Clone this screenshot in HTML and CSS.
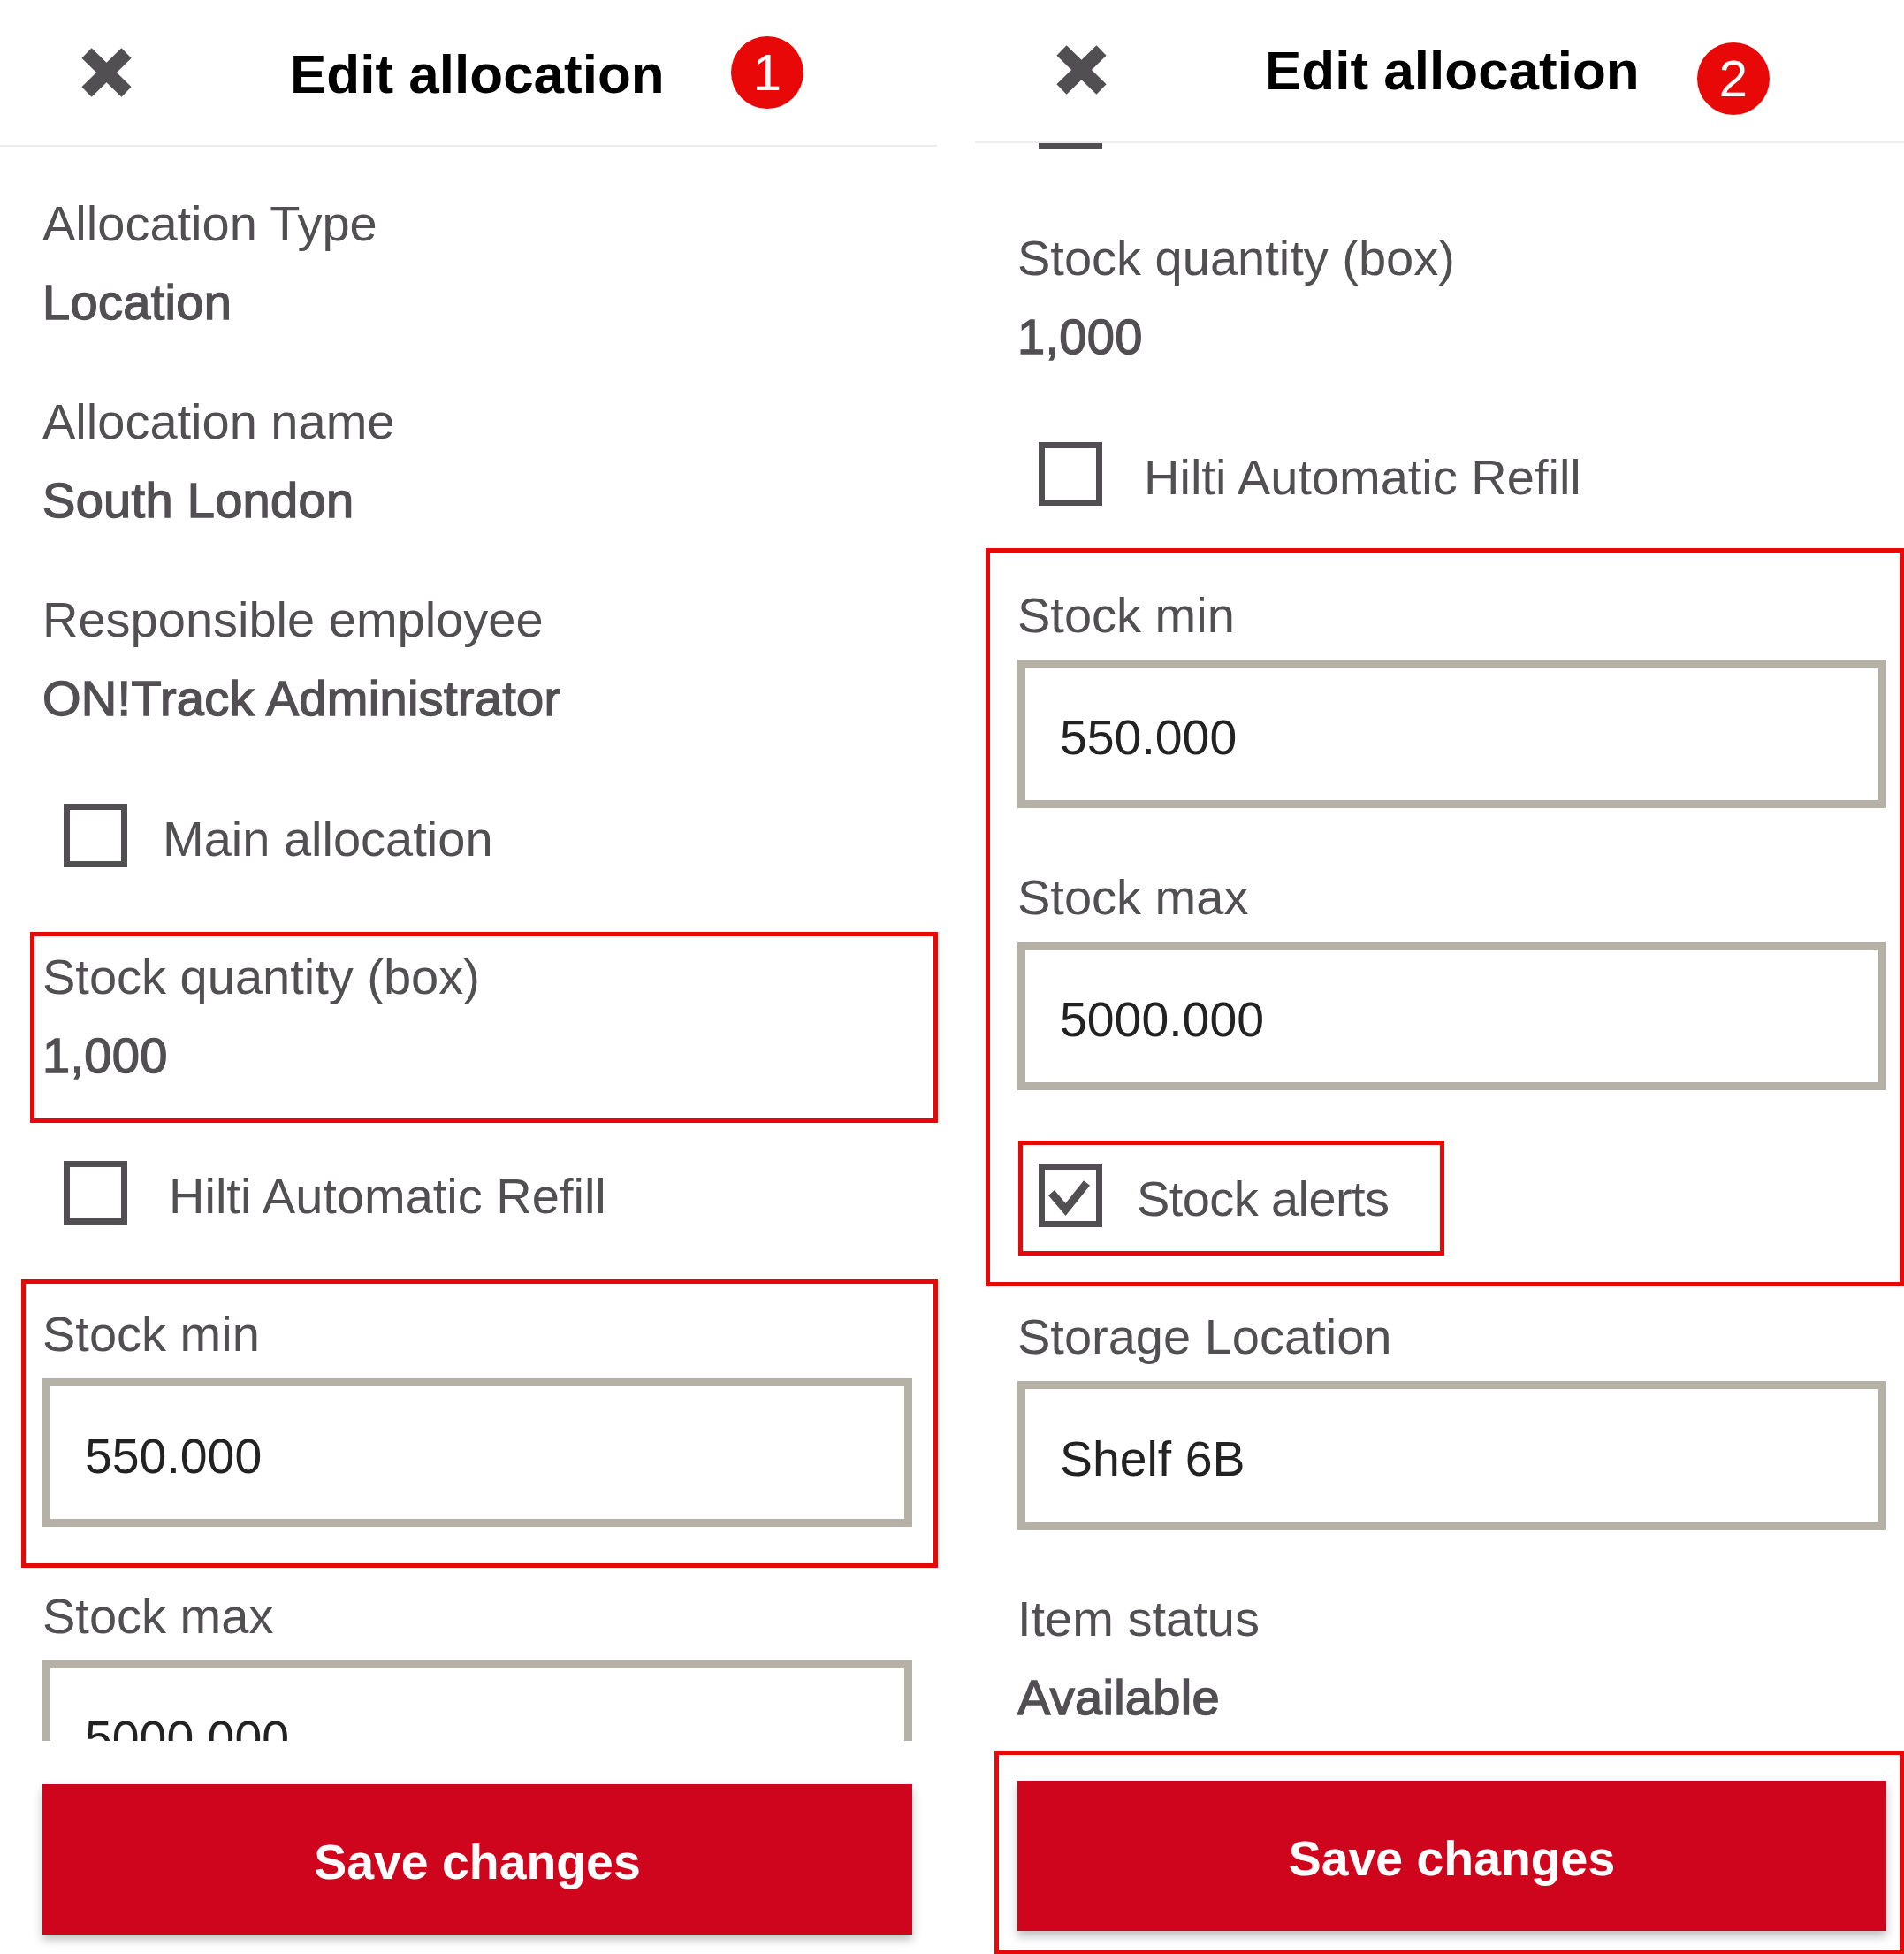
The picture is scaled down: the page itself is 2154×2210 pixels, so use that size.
FILE: index.html
```html
<!DOCTYPE html>
<html>
<head>
  <meta charset="UTF-8">
  <title>Edit allocation</title>
  <link rel="stylesheet" href="styles.css">
</head>
<body>
  <div class="screens">

    <div class="phone phone-a">
      <div class="header">
        <svg class="close" viewBox="0 0 57 56"><path d="M6 6L51 50M51 6L6 50"/></svg>
        <h1>Edit allocation</h1>
      </div>
      <div class="scroll">
        <div class="field">
          <div class="label">Allocation Type</div>
          <div class="value">Location</div>
        </div>
        <div class="field">
          <div class="label">Allocation name</div>
          <div class="value">South London</div>
        </div>
        <div class="field">
          <div class="label">Responsible employee</div>
          <div class="value">ON!Track Administrator</div>
        </div>
        <div class="check">
          <span class="box"></span>
          <span class="check-text">Main allocation</span>
        </div>
        <div class="field">
          <div class="label">Stock quantity (box)</div>
          <div class="value">1,000</div>
        </div>
        <div class="check check-wide">
          <span class="box"></span>
          <span class="check-text">Hilti Automatic Refill</span>
        </div>
        <div class="field">
          <div class="label">Stock min</div>
          <div class="input">550.000</div>
        </div>
        <div class="field">
          <div class="label">Stock max</div>
          <div class="input">5000.000</div>
        </div>
      </div>
      <button class="save" type="button">Save changes</button>

      <div class="badge">1</div>
      <div class="mark mark-qty"></div>
      <div class="mark mark-min"></div>
    </div>

    <div class="phone phone-b">
      <div class="header">
        <svg class="close" viewBox="0 0 57 56"><path d="M6 6L51 50M51 6L6 50"/></svg>
        <h1>Edit allocation</h1>
      </div>
      <div class="scroll">
        <div class="check check-cut">
          <span class="box"></span>
        </div>
        <div class="field">
          <div class="label">Stock quantity (box)</div>
          <div class="value">1,000</div>
        </div>
        <div class="check check-wide">
          <span class="box"></span>
          <span class="check-text">Hilti Automatic Refill</span>
        </div>
        <div class="field">
          <div class="label">Stock min</div>
          <div class="input">550.000</div>
        </div>
        <div class="field">
          <div class="label">Stock max</div>
          <div class="input">5000.000</div>
        </div>
        <div class="check check-alerts">
          <span class="box">
            <svg class="tick" viewBox="0 0 71 72"><path d="M14 33L30 52L54 22"/></svg>
          </span>
          <span class="check-text">Stock alerts</span>
        </div>
        <div class="field">
          <div class="label">Storage Location</div>
          <div class="input">Shelf 6B</div>
        </div>
        <div class="field">
          <div class="label">Item status</div>
          <div class="value">Available</div>
        </div>
      </div>
      <button class="save" type="button">Save changes</button>

      <div class="badge">2</div>
      <div class="mark mark-stock"></div>
      <div class="mark mark-alerts"></div>
      <div class="mark mark-save"></div>
    </div>

  </div>
</body>
</html>
```

FILE: styles.css
```css
html, body {
  margin: 0;
  background: #fff;
}
body {
  font-family: "Liberation Sans", Arial, sans-serif;
  font-size: 56px;
  color: #524f53;
  overflow: hidden;
}
.screens {
  display: flex;
  gap: 43px;
  height: 2210px;
  overflow: hidden;
}
.phone {
  position: relative;
  display: flex;
  flex-direction: column;
  box-sizing: border-box;
  height: 2210px;
}
.phone-a {
  width: 1060px;
  padding: 0 28px 0 48px;
}
.phone-b {
  width: 1051px;
  padding: 0 20px 0 48px;
}

/* header */
.header {
  display: flex;
  align-items: center;
  box-sizing: border-box;
  height: 166px;
  margin: 0 -28px 0 -48px;
  padding-left: 92px;
  border-bottom: 2px solid #ececec;
}
.phone-b .header {
  height: 162px;
  margin: 0 -20px 0 -48px;
}
.close {
  width: 57px;
  height: 56px;
  flex: none;
  fill: none;
  stroke: #524f53;
  stroke-width: 16;
}
.phone-b .close {
  margin-top: -3px;
}
h1 {
  margin: 3px 0 0 179px;
  font-size: 62px;
  line-height: 70px;
  font-weight: bold;
  color: #000;
}
.phone-b h1 {
  margin-top: 0;
}

/* scrolling form */
.scroll {
  flex: none;
  height: 1803px;
  padding-top: 42px;
  box-sizing: border-box;
  overflow: hidden;
}
.phone-b .scroll {
  padding-top: 0;
}
.field {
  margin-bottom: 46px;
}
.label {
  line-height: 89px;
}
/* the values are a faux bold: regular widths with a thicker stroke */
.value {
  line-height: 89px;
  letter-spacing: 0.3px;
  -webkit-text-stroke: 1.4px #524f53;
}
.input {
  box-sizing: border-box;
  height: 168px;
  margin: 6px 0 56px;
  padding: 9px 39px 0;
  border: 9px solid #b5b1a7;
  background: #fff;
  color: #222;
  font-size: 55.4px;
  line-height: 140px;
}

/* checkboxes */
.check {
  display: flex;
  align-items: center;
  height: 72px;
  margin: 75px 0 79px;
  padding-left: 24px;
}
.box {
  display: block;
  box-sizing: border-box;
  position: relative;
  flex: none;
  width: 72px;
  height: 72px;
  border: 7px solid #524f53;
}
.check-text {
  margin-left: 40px;
  padding-top: 6px;
}
.check-wide .check-text {
  margin-left: 47px;
}
.check-cut {
  margin-top: -66px;
}
.check-alerts {
  margin-top: 83px;
}
.check-alerts .check-text {
  margin-left: 39px;
  letter-spacing: -0.6px;
}
.tick {
  display: block;
  width: 72px;
  height: 72px;
  margin: -7px;
  fill: none;
  stroke: #524f53;
  stroke-width: 9;
}

/* footer button */
.save {
  flex: none;
  height: 170px;
  margin-top: 49px;
  padding: 5px 0 0;
  border: none;
  background: #cf051e;
  color: #fff;
  font-family: inherit;
  font-size: 55.4px;
  font-weight: bold;
  box-shadow: 0 6px 10px rgba(0, 0, 0, 0.25);
}

/* annotations on top of the screens */
.badge {
  position: absolute;
  width: 82px;
  height: 82px;
  border-radius: 50%;
  background: #e90808;
  color: #fff;
  font-size: 58px;
  line-height: 82px;
  text-align: center;
}
.phone-a .badge {
  left: 827px;
  top: 41px;
}
.phone-b .badge {
  left: 817px;
  top: 48px;
}
.mark {
  position: absolute;
  box-sizing: border-box;
  border: 5px solid #e90808;
}
.mark-qty {
  left: 34px;
  top: 1054px;
  width: 1027px;
  height: 216px;
}
.mark-min {
  left: 24px;
  top: 1447px;
  width: 1037px;
  height: 326px;
}
.mark-stock {
  left: 12px;
  top: 620px;
  width: 1039px;
  height: 835px;
}
.mark-alerts {
  left: 49px;
  top: 1290px;
  width: 482px;
  height: 130px;
}
.mark-save {
  left: 22px;
  top: 1980px;
  width: 1029px;
  height: 230px;
}
```
